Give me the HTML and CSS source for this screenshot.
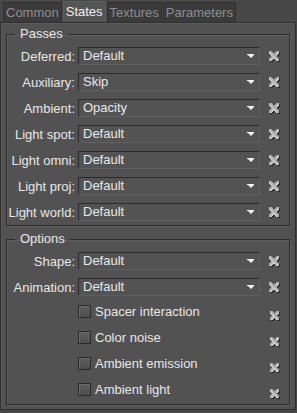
FILE: index.html
```html
<!DOCTYPE html>
<html lang="en">
<head>
    <meta charset="UTF-8">
    <title>Material states</title>
    <link rel="stylesheet" href="styles.css">
</head>
<body>
    <div class="tabs">
        <div class="tab">Common</div>
        <div class="tab active">States</div>
        <div class="tab">Textures</div>
        <div class="tab">Parameters</div>
    </div>
    <div class="panel">
        <fieldset class="group">
            <legend>Passes</legend>
            <div class="rows">
                <label>Deferred:</label><div class="combo">Default</div><span class="clear"></span>
                <label>Auxiliary:</label><div class="combo">Skip</div><span class="clear"></span>
                <label>Ambient:</label><div class="combo">Opacity</div><span class="clear"></span>
                <label>Light spot:</label><div class="combo">Default</div><span class="clear"></span>
                <label>Light omni:</label><div class="combo">Default</div><span class="clear"></span>
                <label>Light proj:</label><div class="combo">Default</div><span class="clear"></span>
                <label>Light world:</label><div class="combo">Default</div><span class="clear"></span>
            </div>
        </fieldset>
        <fieldset class="group">
            <legend>Options</legend>
            <div class="rows">
                <label>Shape:</label><div class="combo">Default</div><span class="clear"></span>
                <label>Animation:</label><div class="combo">Default</div><span class="clear"></span>
                <span></span><div class="check"><i></i>Spacer interaction</div><span class="clear small"></span>
                <span></span><div class="check"><i></i>Color noise</div><span class="clear small"></span>
                <span></span><div class="check"><i></i>Ambient emission</div><span class="clear small"></span>
                <span></span><div class="check"><i></i>Ambient light</div><span class="clear small"></span>
            </div>
        </fieldset>
    </div>
</body>
</html>
```

FILE: styles.css
```css
body {
    margin: 0;
    background: #474747;
    font-family: "Liberation Sans", Arial, sans-serif;
    font-size: 13px;
    color: #e8e8e8;
    width: 297px;
    height: 413px;
    overflow: hidden;
}
.tabs {
    display: flex;
    height: 22px;
    padding-left: 3px;
    align-items: flex-end;
}
.tab {
    height: 20px;
    line-height: 20px;
    padding: 0 2px;
    margin-right: 1px;
    background: #3b3b3b;
    color: #8e8e8e;
    border: 1px solid #303030;
    border-bottom: none;
    box-sizing: border-box;
}
.tab.active {
    height: 21px;
    background: #555555;
    color: #f0f0f0;
    border-color: #5e5e5e;
}
.panel {
    height: 388px;
    background: #525252;
    border: 1px solid #2f2f2f;
    box-shadow: inset 1px 1px #5c5c5c;
    margin-right: 1px;
    padding-top: 3px;
    box-sizing: border-box;
}
.group {
    margin: 0 5px 5px 5px;
    padding: 5px 0 4px 0;
    border: 1px solid #2c2c2c;
    box-shadow: inset 1px 1px #5f5f5f, 1px 1px #5f5f5f;
}
.group legend {
    margin-left: 8px;
    padding: 0 5px;
    line-height: 16px;
    color: #e8e8e8;
}
.rows {
    display: grid;
    grid-template-columns: 68px 182px 22px;
    grid-auto-rows: 18px;
    row-gap: 8px;
    column-gap: 3px;
    align-items: center;
}
.rows label {
    text-align: right;
    white-space: nowrap;
}
.combo {
    height: 18px;
    line-height: 16px;
    padding-left: 4px;
    box-sizing: border-box;
    border: 1px solid #2a2a2a;
    border-right-color: #5e5e5e;
    border-bottom-color: #5e5e5e;
    background: #535353;
    position: relative;
}
.combo::after {
    content: "";
    position: absolute;
    right: 5px;
    top: 6px;
    width: 7px;
    height: 1px;
    background: #f2f2f2;
}
.combo::before {
    content: "";
    position: absolute;
    right: 5px;
    top: 7px;
    border-left: 3.5px solid transparent;
    border-right: 3.5px solid transparent;
    border-top: 3px solid #f2f2f2;
}
.clear {
    width: 10px;
    height: 10px;
    justify-self: center;
    background:
        linear-gradient(45deg, transparent 38%, #d2d2d2 38%, #9c9c9c 62%, transparent 62%),
        linear-gradient(-45deg, transparent 38%, #d2d2d2 38%, #9c9c9c 62%, transparent 62%);
    filter: drop-shadow(1px 1px 0 #2a2a2a);
}
.clear.small {
    width: 9px;
    height: 9px;
    margin-top: 4px;
}
.check {
    display: flex;
    align-items: center;
    gap: 4px;
    white-space: nowrap;
    margin-top: -4px;
}
.check i {
    width: 13px;
    height: 13px;
    box-sizing: border-box;
    border: 1px solid #2a2a2a;
    background: linear-gradient(#5e5e5e, #4e4e4e);
    box-shadow: inset 1px 1px #6a6a6a;
}
```
